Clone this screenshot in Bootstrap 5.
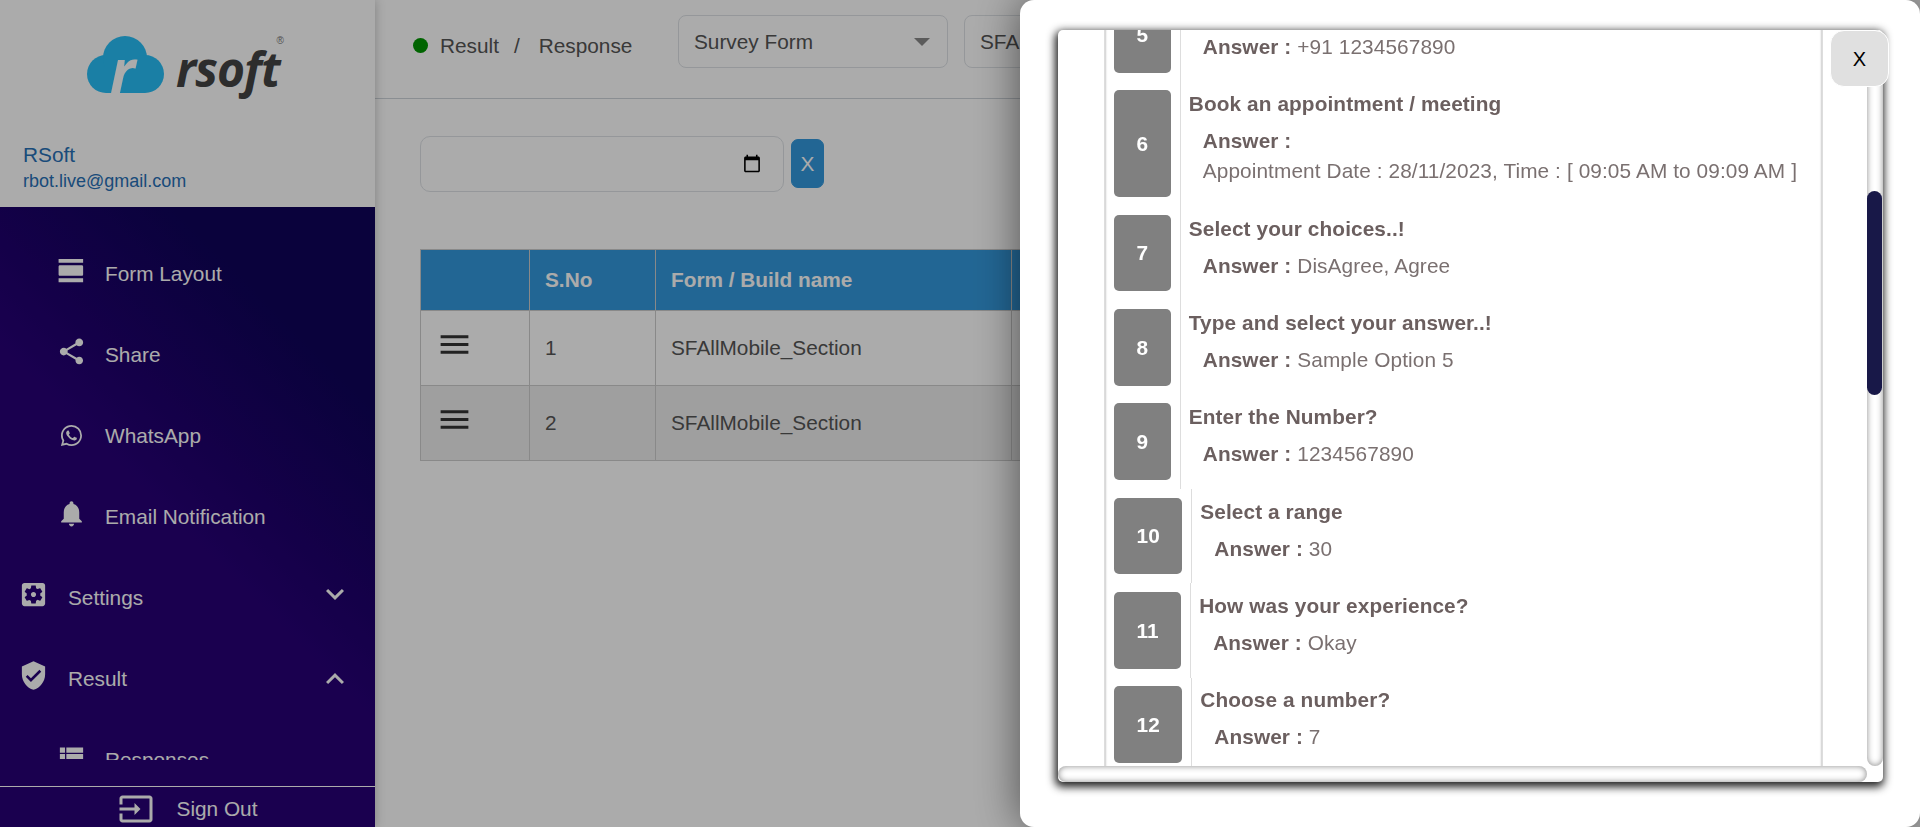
<!DOCTYPE html>
<html lang="en">
<head>
    <meta charset="UTF-8">
    <meta name="viewport" content="width=device-width, initial-scale=1.0">
    <link href="https://cdn.jsdelivr.net/npm/bootstrap@5.3.0/dist/css/bootstrap.min.css" rel="stylesheet">
    <title>Result / Response</title>
    <style>
        body {
            font-family: "Liberation Sans", Arial, sans-serif;
            font-size: 20.8px;
            height: 100vh;
            overflow: hidden;
            background-color: #fff;
            color: #555;
        }

        /* sidebar */
        .side-panel {
            width: 375px;
            height: 100vh;
            background: linear-gradient(45deg, #270077 40%, #0f035a 66%);
            box-shadow: 0 0 10px rgba(0, 0, 0, .25);
            color: #fff;
            z-index: 1;
        }

        .brand-box {
            height: 207px;
            background-color: #fff;
            padding: 36px 0 0 23px;
        }

        .brand-logo {
            height: 97px;
            margin-left: 64px;
        }

        .brand-word {
            font-family: "Open Sans", sans-serif;
            font-weight: 700;
            font-style: italic;
            font-size: 48px;
            line-height: 60px;
            letter-spacing: -1px;
            color: #444;
            margin: 3px 0 0 11px;
        }

        .brand-reg {
            font-size: 10px;
            color: #777;
            line-height: 20px;
            margin-top: -5px;
            margin-left: -3px;
        }

        .user-name {
            color: #2770b6;
            line-height: 26px;
            margin-top: 9px;
        }

        .user-mail {
            color: #2770b6;
            font-size: 18px;
            line-height: 26px;
        }

        .side-nav {
            height: 553px;
            padding-top: 26px;
            overflow: hidden;
            flex: none;
        }

        .side-link {
            height: 81px;
            padding-left: 56px;
            gap: 18px;
            color: #fff;
            text-decoration: none;
            flex: none;
        }

        .side-link.top-level {
            padding-left: 18px;
            gap: 19px;
        }

        .side-icon {
            width: 31px;
            height: 31px;
            margin-bottom: 7px;
            flex: none;
            fill: #fff;
        }

        .side-icon.low {
            margin-bottom: 1px;
        }

        .side-chevron {
            width: 36px;
            height: 36px;
            margin-right: 22px;
            fill: #fff;
        }

        .sign-out {
            height: 41px;
            margin-top: auto;
            border-top: 1px solid #fff;
            gap: 23px;
            padding-top: 3px;
            flex: none;
        }

        .sign-out svg {
            width: 36px;
            height: 36px;
            fill: #fff;
        }

        /* page */
        .top-bar {
            height: 99px;
            padding: 15px 0 0 38px;
            border-bottom: 1px solid #ced4da;
            flex: none;
        }

        .crumbs {
            margin-top: 15px;
            gap: 12px;
            line-height: 31px;
            width: 265px;
            white-space: nowrap;
            flex: none;
        }

        .live-dot {
            width: 15px;
            height: 15px;
            background-color: #009500;
            border-radius: 50%;
            flex: none;
        }

        .crumb-sep {
            margin: 0 7px 0 3px;
        }

        .pick {
            width: 270px;
            height: 53px;
            font-size: 20.8px;
            color: #555;
            padding: 0 40px 0 15px;
            margin: 0 16px 0 0;
            border-radius: 8px;
            flex: none;
            background-size: 16px 8px;
            background-position: right 17px center;
            background-image: url("data:image/svg+xml,%3csvg xmlns='http://www.w3.org/2000/svg' viewBox='0 0 16 8'%3e%3cpath fill='%23888' d='M0 0h16L8 8z'/%3e%3c/svg%3e");
        }

        .page-body {
            padding: 37px 45px 0;
        }

        .date-row {
            gap: 7px;
            margin-bottom: 57px;
        }

        .date-box {
            width: 364px;
            height: 56px;
            border-radius: 10px;
        }

        .date-box::-webkit-datetime-edit {
            visibility: hidden;
        }

        .date-box::-webkit-calendar-picker-indicator {
            width: 20px;
            height: 20px;
            padding: 0;
            margin-right: 9px;
        }

        .clear-btn {
            width: 33px;
            height: 49px;
            margin-top: 3px;
            padding: 0;
            background-color: #3499dd;
            border: 1px solid #3499dd;
            border-radius: 7px;
            color: #fff;
            font-size: 20.8px;
        }

        .result-table {
            table-layout: fixed;
            width: 1455px;
            border-collapse: collapse;
            color: #555;
        }

        .result-table th,
        .result-table td {
            border: 1px solid #ccc;
            padding: 0 15px;
            vertical-align: middle;
        }

        .result-table th {
            height: 61px;
            background-color: #3499dd;
            color: #fff;
            font-weight: 700;
        }

        .result-table td {
            height: 75px;
        }

        .result-table tr.alt td {
            background-color: #eee;
        }

        .menu-icon {
            width: 37px;
            height: 37px;
            margin: 0 0 8px;
            fill: #333;
        }

        /* overlay and drawer */
        .shade {
            position: fixed;
            inset: 0;
            background-color: rgba(0, 0, 0, .33);
            z-index: 5;
        }

        .drawer {
            position: fixed;
            top: 0;
            right: 0;
            bottom: 0;
            width: 900px;
            padding: 30px 37px 45px 38px;
            background-color: #fff;
            border-radius: 14px;
            box-shadow: 0 0 45px rgba(0, 0, 0, .55);
            z-index: 6;
        }

        .drawer-close {
            position: absolute;
            top: 30px;
            left: 810px;
            width: 59px;
            height: 57px;
            padding: 0;
            background-color: #e0e0e0;
            border: 1px solid #fff;
            border-radius: 14px;
            color: #000;
            font-size: 20px;
            z-index: 2;
        }

        .answer-pane {
            display: grid;
            grid-template-columns: 809px 16px;
            grid-template-rows: 736px 16px;
            height: 752px;
            border-radius: 5px;
            box-shadow: -1px 3px 8px 2px #222;
        }

        .answer-view {
            overflow: hidden;
        }

        .track-y,
        .track-x {
            box-shadow: inset 0 0 6px #888;
            border-radius: 10px;
        }

        .thumb-y {
            width: 15px;
            height: 204px;
            margin-top: 161px;
            background-color: #181848;
            border-radius: 8px;
        }

        .answer-list {
            width: 719px;
            margin-left: 46px;
            box-shadow: inset 2px 0 2px -1px #ccc, inset -2px 0 2px -1px #ccc;
            border-left: 1px solid #ddd;
            border-right: 1px solid #ddd;
        }

        .spacer-top {
            height: 537px;
        }

        .spacer-end {
            height: 1333px;
        }

        .answer-row {
            padding-left: 9px;
        }

        .num-box {
            margin: 8.85px 9px 8.85px 0;
            padding: 0 22.6px;
            background-color: #808080;
            border-radius: 5px;
            color: #fff;
            font-weight: 700;
            flex: none;
        }

        .answer-text {
            padding: 8.85px 0 8.85px 8px;
            border-left: 1px solid #ddd;
            color: #6b5f5f;
            letter-spacing: .1px;
            flex: 1;
        }

        .answer-q {
            font-weight: 700;
            line-height: 28px;
            white-space: nowrap;
        }

        .answer-a {
            padding-left: 14px;
            margin-top: 9px;
            line-height: 28px;
            padding-bottom: 11.7px;
            color: #7a7070;
        }

        .answer-a b {
            color: #6b5f5f;
        }

        .answer-v {
            margin-top: 2px;
        }
    </style>
</head>
<body>

<div class="d-flex">
    <!-- sidebar -->
    <div class="side-panel d-flex flex-column flex-shrink-0">
        <div class="brand-box">
            <div class="brand-logo d-flex align-items-start">
                <svg width="78" height="72" viewBox="0 0 78 72">
                    <g fill="#27bef6">
                        <circle cx="19" cy="38" r="19"/>
                        <circle cx="38" cy="22" r="22"/>
                        <circle cx="58" cy="38" r="19"/>
                        <rect x="19" y="30" width="39" height="27"/>
                    </g>
                    <text x="23" y="57" font-family="Open Sans" font-weight="700" font-style="italic" font-size="60" fill="#fff">r</text>
                </svg>
                <div class="brand-word">rsoft</div>
                <div class="brand-reg">®</div>
            </div>
            <div class="user-name">RSoft</div>
            <div class="user-mail">rbot.live@gmail.com</div>
        </div>

        <div class="side-nav d-flex flex-column">
            <a class="side-link d-flex align-items-center" href="#">
                <svg class="side-icon" viewBox="0 0 24 24"><path d="M2 21h19v-3H2v3zM20 8H3c-.55 0-1 .45-1 1v6c0 .55.45 1 1 1h17c.55 0 1-.45 1-1V9c0-.55-.45-1-1-1zM2 3v3h19V3H2z"/></svg>
                <span>Form Layout</span>
            </a>
            <a class="side-link d-flex align-items-center" href="#">
                <svg class="side-icon" viewBox="0 0 24 24"><path d="M18 16.08c-.76 0-1.44.3-1.96.77L8.91 12.7c.05-.23.09-.46.09-.7s-.04-.47-.09-.7l7.05-4.11c.54.5 1.25.81 2.04.81 1.66 0 3-1.34 3-3s-1.34-3-3-3-3 1.34-3 3c0 .24.04.47.09.7L8.04 9.81C7.5 9.31 6.79 9 6 9c-1.66 0-3 1.34-3 3s1.34 3 3 3c.79 0 1.5-.31 2.04-.81l7.12 4.16c-.05.21-.08.43-.08.65 0 1.61 1.31 2.92 2.92 2.92 1.61 0 2.92-1.31 2.92-2.92s-1.31-2.92-2.92-2.92z"/></svg>
                <span>Share</span>
            </a>
            <a class="side-link d-flex align-items-center" href="#">
                <svg class="side-icon low" viewBox="-3.7 -3.7 23.4 23.4"><path d="M13.601 2.326A7.854 7.854 0 0 0 7.994 0C3.627 0 .068 3.558.064 7.926c0 1.399.366 2.76 1.057 3.965L0 16l4.204-1.102a7.933 7.933 0 0 0 3.79.965h.004c4.368 0 7.926-3.558 7.93-7.93A7.898 7.898 0 0 0 13.6 2.326zM7.994 14.521a6.573 6.573 0 0 1-3.356-.92l-.24-.144-2.494.654.666-2.433-.156-.251a6.56 6.56 0 0 1-1.007-3.505c0-3.626 2.957-6.584 6.591-6.584a6.56 6.56 0 0 1 4.66 1.931 6.557 6.557 0 0 1 1.928 4.66c-.004 3.639-2.961 6.592-6.592 6.592zm3.615-4.934c-.197-.099-1.17-.578-1.353-.646-.182-.065-.315-.099-.445.099-.133.197-.513.646-.627.775-.114.133-.232.148-.43.05-.197-.1-.836-.308-1.592-.985-.59-.525-.985-1.175-1.103-1.372-.114-.198-.011-.304.088-.403.087-.088.197-.232.296-.346.1-.114.133-.198.198-.33.065-.134.034-.248-.015-.347-.05-.099-.445-1.076-.612-1.47-.16-.389-.323-.335-.445-.34-.114-.007-.247-.007-.38-.007a.729.729 0 0 0-.529.247c-.182.198-.691.677-.691 1.654 0 .977.71 1.916.81 2.049.098.133 1.394 2.132 3.383 2.992.47.205.84.326 1.129.418.475.152.904.129 1.246.08.38-.058 1.171-.48 1.338-.943.164-.464.164-.86.114-.943-.049-.084-.182-.133-.38-.232z"/></svg>
                <span>WhatsApp</span>
            </a>
            <a class="side-link d-flex align-items-center" href="#">
                <svg class="side-icon" viewBox="0 0 24 24"><path d="M12 22c1.1 0 2-.9 2-2h-4c0 1.1.89 2 2 2zm6-6v-5c0-3.07-1.64-5.64-4.5-6.32V4c0-.83-.67-1.5-1.5-1.5s-1.5.67-1.5 1.5v.68C7.63 5.36 6 7.92 6 11v5l-2 2v1h16v-1l-2-2z"/></svg>
                <span>Email Notification</span>
            </a>
            <a class="side-link top-level d-flex align-items-center" href="#">
                <svg class="side-icon" viewBox="0 0 24 24"><path d="M12 10c-1.1 0-2 .9-2 2s.9 2 2 2 2-.9 2-2-.9-2-2-2zm7-7H5c-1.1 0-2 .9-2 2v14c0 1.1.9 2 2 2h14c1.1 0 2-.9 2-2V5c0-1.1-.9-2-2-2zm-1.75 9c0 .23-.02.46-.05.68l1.48 1.16c.13.11.17.3.08.45l-1.4 2.42c-.09.15-.27.21-.43.15l-1.74-.7c-.36.28-.76.51-1.18.69l-.26 1.85c-.03.17-.18.3-.35.3h-2.8c-.17 0-.32-.13-.35-.29l-.26-1.85c-.43-.18-.82-.41-1.18-.69l-1.74.7c-.16.06-.34 0-.43-.15l-1.4-2.42c-.09-.15-.05-.34.08-.45l1.48-1.16c-.03-.23-.05-.46-.05-.69 0-.23.02-.46.05-.68l-1.48-1.16c-.13-.11-.17-.3-.08-.45l1.4-2.42c.09-.15.27-.21.43-.15l1.74.7c.36-.28.76-.51 1.18-.69l.26-1.85c.03-.17.18-.3.35-.3h2.8c.17 0 .32.13.35.29l.26 1.85c.43.18.82.41 1.18.69l1.74-.7c.16-.06.34 0 .43.15l1.4 2.42c.09.15.05.34-.08.45l-1.48 1.16c.03.23.05.46.05.69z"/></svg>
                <span>Settings</span>
                <svg class="side-chevron ms-auto mb-2" viewBox="0 0 24 24"><path d="M7.41 8.59L12 13.17l4.59-4.58L18 10l-6 6-6-6 1.41-1.41z"/></svg>
            </a>
            <a class="side-link top-level d-flex align-items-center" href="#">
                <svg class="side-icon" viewBox="0 0 24 24"><path d="M12 1L3 5v6c0 5.55 3.84 10.74 9 12 5.16-1.26 9-6.45 9-12V5l-9-4zm-2 16l-4-4 1.41-1.41L10 14.17l6.59-6.59L18 9l-8 8z"/></svg>
                <span>Result</span>
                <svg class="side-chevron ms-auto" viewBox="0 0 24 24"><path d="M7.41 15.41L12 10.83l4.59 4.58L18 14l-6-6-6 6z"/></svg>
            </a>
            <a class="side-link d-flex align-items-center" href="#">
                <svg class="side-icon" viewBox="0 0 24 24"><path d="M3 14h4v-4H3v4zm0 5h4v-4H3v4zM3 9h4V5H3v4zm5 5h13v-4H8v4zm0 5h13v-4H8v4zM8 5v4h13V5H8z"/></svg>
                <span>Responses</span>
            </a>
        </div>

        <div class="sign-out d-flex align-items-center justify-content-center">
            <svg viewBox="0 0 24 24"><path d="M21 3.01H3c-1.1 0-2 .9-2 2V9h2V4.99h18v14.03H3V15H1v4.01c0 1.1.9 1.98 2 1.98h18c1.1 0 2-.88 2-1.98v-14c0-1.11-.9-2-2-2zM11 16l4-4-4-4v3H1v2h10v3z"/></svg>
            <span>Sign Out</span>
        </div>
    </div>

    <!-- page -->
    <div class="flex-grow-1 overflow-hidden">
        <div class="top-bar d-flex align-items-start">
            <div class="crumbs d-flex align-items-center">
                <span class="live-dot"></span>
                <span>Result</span>
                <span class="crumb-sep">/</span>
                <span>Response</span>
            </div>
            <select class="form-select pick"><option>Survey Form</option></select>
            <select class="form-select pick"><option>SFAllMobile_Section</option></select>
        </div>

        <div class="page-body">
            <div class="date-row d-flex align-items-start">
                <input type="date" class="form-control date-box">
                <button type="button" class="btn clear-btn">X</button>
            </div>

            <table class="result-table">
                <colgroup>
                    <col style="width: 109px">
                    <col style="width: 126px">
                    <col style="width: 356px">
                    <col>
                </colgroup>
                <thead>
                    <tr><th></th><th>S.No</th><th>Form / Build name</th><th></th></tr>
                </thead>
                <tbody>
                    <tr>
                        <td><svg class="menu-icon" viewBox="0 0 24 24"><path d="M3 18h18v-2H3v2zm0-5h18v-2H3v2zm0-7v2h18V6H3z"/></svg></td>
                        <td>1</td><td>SFAllMobile_Section</td><td></td>
                    </tr>
                    <tr class="alt">
                        <td><svg class="menu-icon" viewBox="0 0 24 24"><path d="M3 18h18v-2H3v2zm0-5h18v-2H3v2zm0-7v2h18V6H3z"/></svg></td>
                        <td>2</td><td>SFAllMobile_Section</td><td></td>
                    </tr>
                </tbody>
            </table>
        </div>
    </div>
</div>

<div class="shade"></div>

<div class="drawer">
    <button type="button" class="drawer-close">X</button>
    <div class="answer-pane">
        <div class="answer-view" id="answerView">
            <div class="answer-list" id="answerList">
                <div class="spacer-top"></div>
            </div>
        </div>
        <div class="track-y"><div class="thumb-y"></div></div>
        <div class="track-x"></div>
        <div></div>
    </div>
</div>

<script src="https://cdn.jsdelivr.net/npm/bootstrap@5.3.0/dist/js/bootstrap.bundle.min.js"></script>
<script>
    document.addEventListener('DOMContentLoaded', function () {
        const answers = [
            { no: 5, question: '\u00a0', answer: '+91 1234567890' },
            { no: 6, question: 'Book an appointment / meeting', answer: '', extra: 'Appointment Date : 28/11/2023, Time : [ 09:05 AM to 09:09 AM ]' },
            { no: 7, question: 'Select your choices..!', answer: 'DisAgree, Agree' },
            { no: 8, question: 'Type and select your answer..!', answer: 'Sample Option 5' },
            { no: 9, question: 'Enter the Number?', answer: '1234567890' },
            { no: 10, question: 'Select a range', answer: '30' },
            { no: 11, question: 'How was your experience?', answer: 'Okay' },
            { no: 12, question: 'Choose a number?', answer: '7' }
        ];

        const list = document.getElementById('answerList');

        answers.forEach(item => {
            const row = document.createElement('div');
            row.className = 'answer-row d-flex';
            row.innerHTML = `
                <div class="num-box d-flex align-items-center justify-content-center">${item.no}</div>
                <div class="answer-text">
                    <div class="answer-q">${item.question}</div>
                    <div class="answer-a">
                        <b>Answer :</b> ${item.answer}
                        ${item.extra ? `<div class="answer-v">${item.extra}</div>` : ''}
                    </div>
                </div>
            `;
            list.appendChild(row);
        });

        const end = document.createElement('div');
        end.className = 'spacer-end';
        list.appendChild(end);

        document.getElementById('answerView').scrollTop = 580;
    });
</script>

</body>
</html>
